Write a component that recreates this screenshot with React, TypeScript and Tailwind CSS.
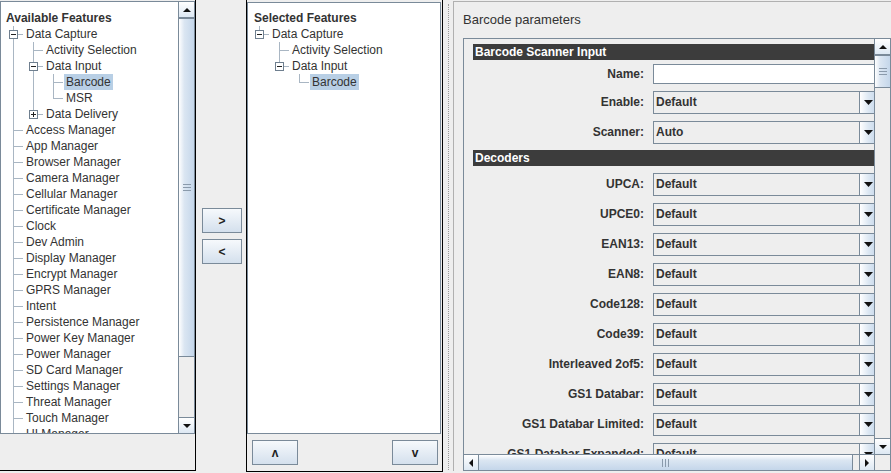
import React from 'react';

type Cell = 'I' | 'T' | 'L' | ' ';
type Row = { cells: Cell[]; label: string; exp?: '+' | '-'; bold?: boolean; sel?: boolean; pad?: boolean };

function TreeCell({ type, exp }: { type: Cell; exp?: '+' | '-' }) {
  return (
    <div className="relative w-[20px] h-[16px] shrink-0">
      {type !== ' ' && (
        <div className={`absolute left-[10px] top-0 w-px bg-[#a9b6c3] ${type === 'L' ? 'h-[8px]' : 'h-[16px]'}`} />
      )}
      {(type === 'T' || type === 'L') && <div className="absolute left-[10px] top-[8px] h-px w-[10px] bg-[#a9b6c3]" />}
      {exp && (
        <div className="absolute left-[6px] top-[4px] w-[9px] h-[9px] border border-[#6f7f8f] bg-white">
          <div className="absolute left-[1px] top-[3px] w-[5px] h-px bg-[#222]" />
          {exp === '+' && <div className="absolute left-[3px] top-[1px] w-px h-[5px] bg-[#222]" />}
        </div>
      )}
    </div>
  );
}

function TreeRow({ row }: { row: Row }) {
  return (
    <div className="flex h-[16px] items-center">
      {row.pad && <div className="w-[2px] shrink-0" />}
      {row.cells.map((c, i) => (
        <TreeCell key={i} type={c} exp={i === row.cells.length - 1 ? row.exp : undefined} />
      ))}
      <span
        className={`ml-[1px] px-[2px] h-[16px] leading-[16px] whitespace-nowrap ${row.bold ? 'font-bold' : ''} ${
          row.sel ? 'bg-[#b8cfe5]' : ''
        }`}
      >
        {row.label}
      </span>
    </div>
  );
}

const leftRows: Row[] = [
  { cells: [], label: 'Available Features', bold: true },
  { cells: ['T'], label: 'Data Capture', exp: '-' },
  { cells: ['I', 'T'], label: 'Activity Selection' },
  { cells: ['I', 'T'], label: 'Data Input', exp: '-' },
  { cells: ['I', 'I', 'T'], label: 'Barcode', sel: true },
  { cells: ['I', 'I', 'L'], label: 'MSR' },
  { cells: ['I', 'L'], label: 'Data Delivery', exp: '+' },
  ...[
    'Access Manager',
    'App Manager',
    'Browser Manager',
    'Camera Manager',
    'Cellular Manager',
    'Certificate Manager',
    'Clock',
    'Dev Admin',
    'Display Manager',
    'Encrypt Manager',
    'GPRS Manager',
    'Intent',
    'Persistence Manager',
    'Power Key Manager',
    'Power Manager',
    'SD Card Manager',
    'Settings Manager',
    'Threat Manager',
    'Touch Manager',
    'UI Manager',
  ].map((l) => ({ cells: ['T'] as Cell[], label: l })),
];

const midRows: Row[] = [
  { cells: [], label: 'Selected Features', bold: true, pad: true },
  { cells: ['L'], label: 'Data Capture', exp: '-' },
  { cells: [' ', 'T'], label: 'Activity Selection' },
  { cells: [' ', 'L'], label: 'Data Input', exp: '-' },
  { cells: [' ', ' ', 'L'], label: 'Barcode', sel: true },
];

function Tri({ dir }: { dir: 'up' | 'down' | 'left' | 'right' }) {
  const pts =
    dir === 'up' ? '0,4 8,4 4,0' : dir === 'down' ? '0,0 8,0 4,4' : dir === 'left' ? '4,0 4,8 0,4' : '0,0 0,8 4,4';
  const w = dir === 'up' || dir === 'down' ? 8 : 4;
  const h = dir === 'up' || dir === 'down' ? 4 : 8;
  return (
    <svg width={w} height={h} viewBox={`0 0 ${w} ${h}`}>
      <polygon points={pts} fill="#111" />
    </svg>
  );
}

function ArrowBtn({ dir, cls }: { dir: 'up' | 'down' | 'left' | 'right'; cls: string }) {
  return (
    <div
      className={`shrink-0 flex items-center justify-center bg-[linear-gradient(to_bottom,#ffffff,#dde8f3)] border-[#7a8a99] ${cls}`}
    >
      <Tri dir={dir} />
    </div>
  );
}

function VScroll({ thumbTop, thumbH }: { thumbTop: number; thumbH: number }) {
  return (
    <div className="w-[16px] shrink-0 flex flex-col bg-[#eeeeee] border-l border-[#7a8a99]">
      <ArrowBtn dir="up" cls="h-[16px] border-b" />
      <div style={{ height: thumbTop }} className="shrink-0" />
      <div
        style={{ height: thumbH }}
        className="shrink-0 flex items-center justify-center border-y border-[#7a8a99] bg-[linear-gradient(to_right,#ffffff,#dbe6f2_35%,#c4d6ea)]"
      >
        <div className="flex flex-col gap-[2px]">
          <div className="w-[8px] h-px bg-[#8a9aab]" />
          <div className="w-[8px] h-px bg-[#8a9aab]" />
          <div className="w-[8px] h-px bg-[#8a9aab]" />
        </div>
      </div>
      <div className="flex-1" />
      <ArrowBtn dir="down" cls="h-[16px] border-t" />
    </div>
  );
}

function Btn({ label, cls }: { label: string; cls: string }) {
  return (
    <div
      className={`flex items-center justify-center border border-[#7a8a99] bg-[linear-gradient(to_bottom,#f6f9fc,#d4e0ed)] font-bold text-[12px] text-[#222] ${cls}`}
    >
      {label}
    </div>
  );
}

function Combo({ value }: { value: string }) {
  return (
    <div className="w-[225px] h-[23px] shrink-0 flex border border-[#7a8a99] bg-[#eeeeee]">
      <div className="flex-1 flex items-center pl-[2px] font-bold">{value}</div>
      <div className="w-[18px] flex items-center justify-center border-l border-[#7a8a99] bg-[linear-gradient(to_right,#ffffff,#dde8f3_50%,#c6d7ea)]">
        <svg width="9" height="5" viewBox="0 0 9 5">
          <polygon points="0,0 9,0 4.5,5" fill="#111" />
        </svg>
      </div>
    </div>
  );
}

function FormRow({ label, children, h = 30 }: { label: string; children: React.ReactNode; h?: number }) {
  return (
    <div style={{ height: h }} className="flex items-center shrink-0">
      <div className="w-[180px] shrink-0 pr-[9px] text-right font-bold whitespace-nowrap">{label}</div>
      {children}
    </div>
  );
}

function Bar({ label }: { label: string }) {
  return (
    <div className="h-[16px] w-[430px] shrink-0 bg-[#3c3c3c] text-white font-bold pl-[2px] leading-[16px] whitespace-nowrap">
      {label}
    </div>
  );
}

const decoders = [
  'UPCA:',
  'UPCE0:',
  'EAN13:',
  'EAN8:',
  'Code128:',
  'Code39:',
  'Interleaved 2of5:',
  'GS1 Databar:',
  'GS1 Databar Limited:',
  'GS1 Databar Expanded:',
];

export default function App() {
  return (
    <div className="w-[891px] h-[473px] overflow-hidden bg-[#eeeeee] text-[12px] text-[#333333] font-['Liberation_Sans',Arial,sans-serif] flex">
      {/* Left panel */}
      <div className="w-[196px] h-[471px] shrink-0 flex flex-col border-r border-b border-black">
        <div className="mt-[1px] h-[433px] flex border border-[#7a8a99] bg-white">
          <div className="flex-1 overflow-hidden pl-[2px] pt-[8px]">
            {leftRows.map((r, i) => (
              <TreeRow key={i} row={r} />
            ))}
          </div>
          <VScroll thumbTop={0} thumbH={339} />
        </div>
      </div>

      {/* Transfer buttons */}
      <div className="w-[50px] shrink-0 flex flex-col items-center pt-[208px] gap-[6px] pl-[2px]">
        <Btn label=">" cls="w-[40px] h-[25px]" />
        <Btn label="<" cls="w-[40px] h-[25px]" />
      </div>

      {/* Middle panel */}
      <div className="w-[197px] h-[472px] shrink-0 flex flex-col border-x border-b border-black">
        <div className="mt-[2px] h-[432px] border border-[#7a8a99] bg-white overflow-hidden pl-[1px] pt-[7px] mr-[1px]">
          {midRows.map((r, i) => (
            <TreeRow key={i} row={r} />
          ))}
        </div>
        <div className="flex-1 flex items-center justify-between pl-[5px] pr-[4px]">
          <Btn label="ʌ" cls="w-[46px] h-[25px]" />
          <Btn label="v" cls="w-[46px] h-[25px]" />
        </div>
      </div>

      {/* Splitter */}
      <div className="w-[10px] shrink-0 flex pl-[5px] pt-[4px]">
        <div className="h-[466px] border-l border-dotted border-[#9a9a9a]" />
      </div>

      {/* Right panel */}
      <div className="flex-1 mt-[1px] h-[470px] flex flex-col border-t border-l border-[#b0b0b0] pl-[9px]">
        <div className="h-[36px] flex items-center shrink-0 text-[13px]">Barcode parameters</div>
        <div className="h-[433px] w-[428px] border border-[#7a8a99] flex flex-col">
          <div className="flex-1 flex min-h-0">
            <div className="flex-1 overflow-hidden pl-[9px] pt-[5px] flex flex-col">
              <Bar label="Barcode Scanner Input" />
              <FormRow label="Name:" h={27}>
                <div className="w-[225px] h-[20px] shrink-0 border border-[#7a8a99] bg-white" />
              </FormRow>
              <FormRow label="Enable:">
                <Combo value="Default" />
              </FormRow>
              <FormRow label="Scanner:">
                <Combo value="Auto" />
              </FormRow>
              <div className="h-[22px] shrink-0 flex items-center">
                <Bar label="Decoders" />
              </div>
              {decoders.map((d) => (
                <FormRow key={d} label={d}>
                  <Combo value="Default" />
                </FormRow>
              ))}
            </div>
            <VScroll thumbTop={0} thumbH={33} />
          </div>
          <div className="h-[16px] shrink-0 flex border-t border-[#7a8a99]">
            <div className="flex-1 flex bg-[#eeeeee]">
              <ArrowBtn dir="left" cls="w-[15px] border-r" />
              <div className="flex-1 flex items-center justify-center border-r border-[#7a8a99] bg-[linear-gradient(to_bottom,#ffffff,#dbe6f2_35%,#c4d6ea)]">
                <div className="flex gap-[2px]">
                  <div className="h-[8px] w-px bg-[#8a9aab]" />
                  <div className="h-[8px] w-px bg-[#8a9aab]" />
                  <div className="h-[8px] w-px bg-[#8a9aab]" />
                </div>
              </div>
              <div className="w-[6px]" />
              <ArrowBtn dir="right" cls="w-[15px] border-l" />
            </div>
            <div className="w-[16px] bg-[#eeeeee] border-l border-[#7a8a99]" />
          </div>
        </div>
      </div>
    </div>
  );
}
